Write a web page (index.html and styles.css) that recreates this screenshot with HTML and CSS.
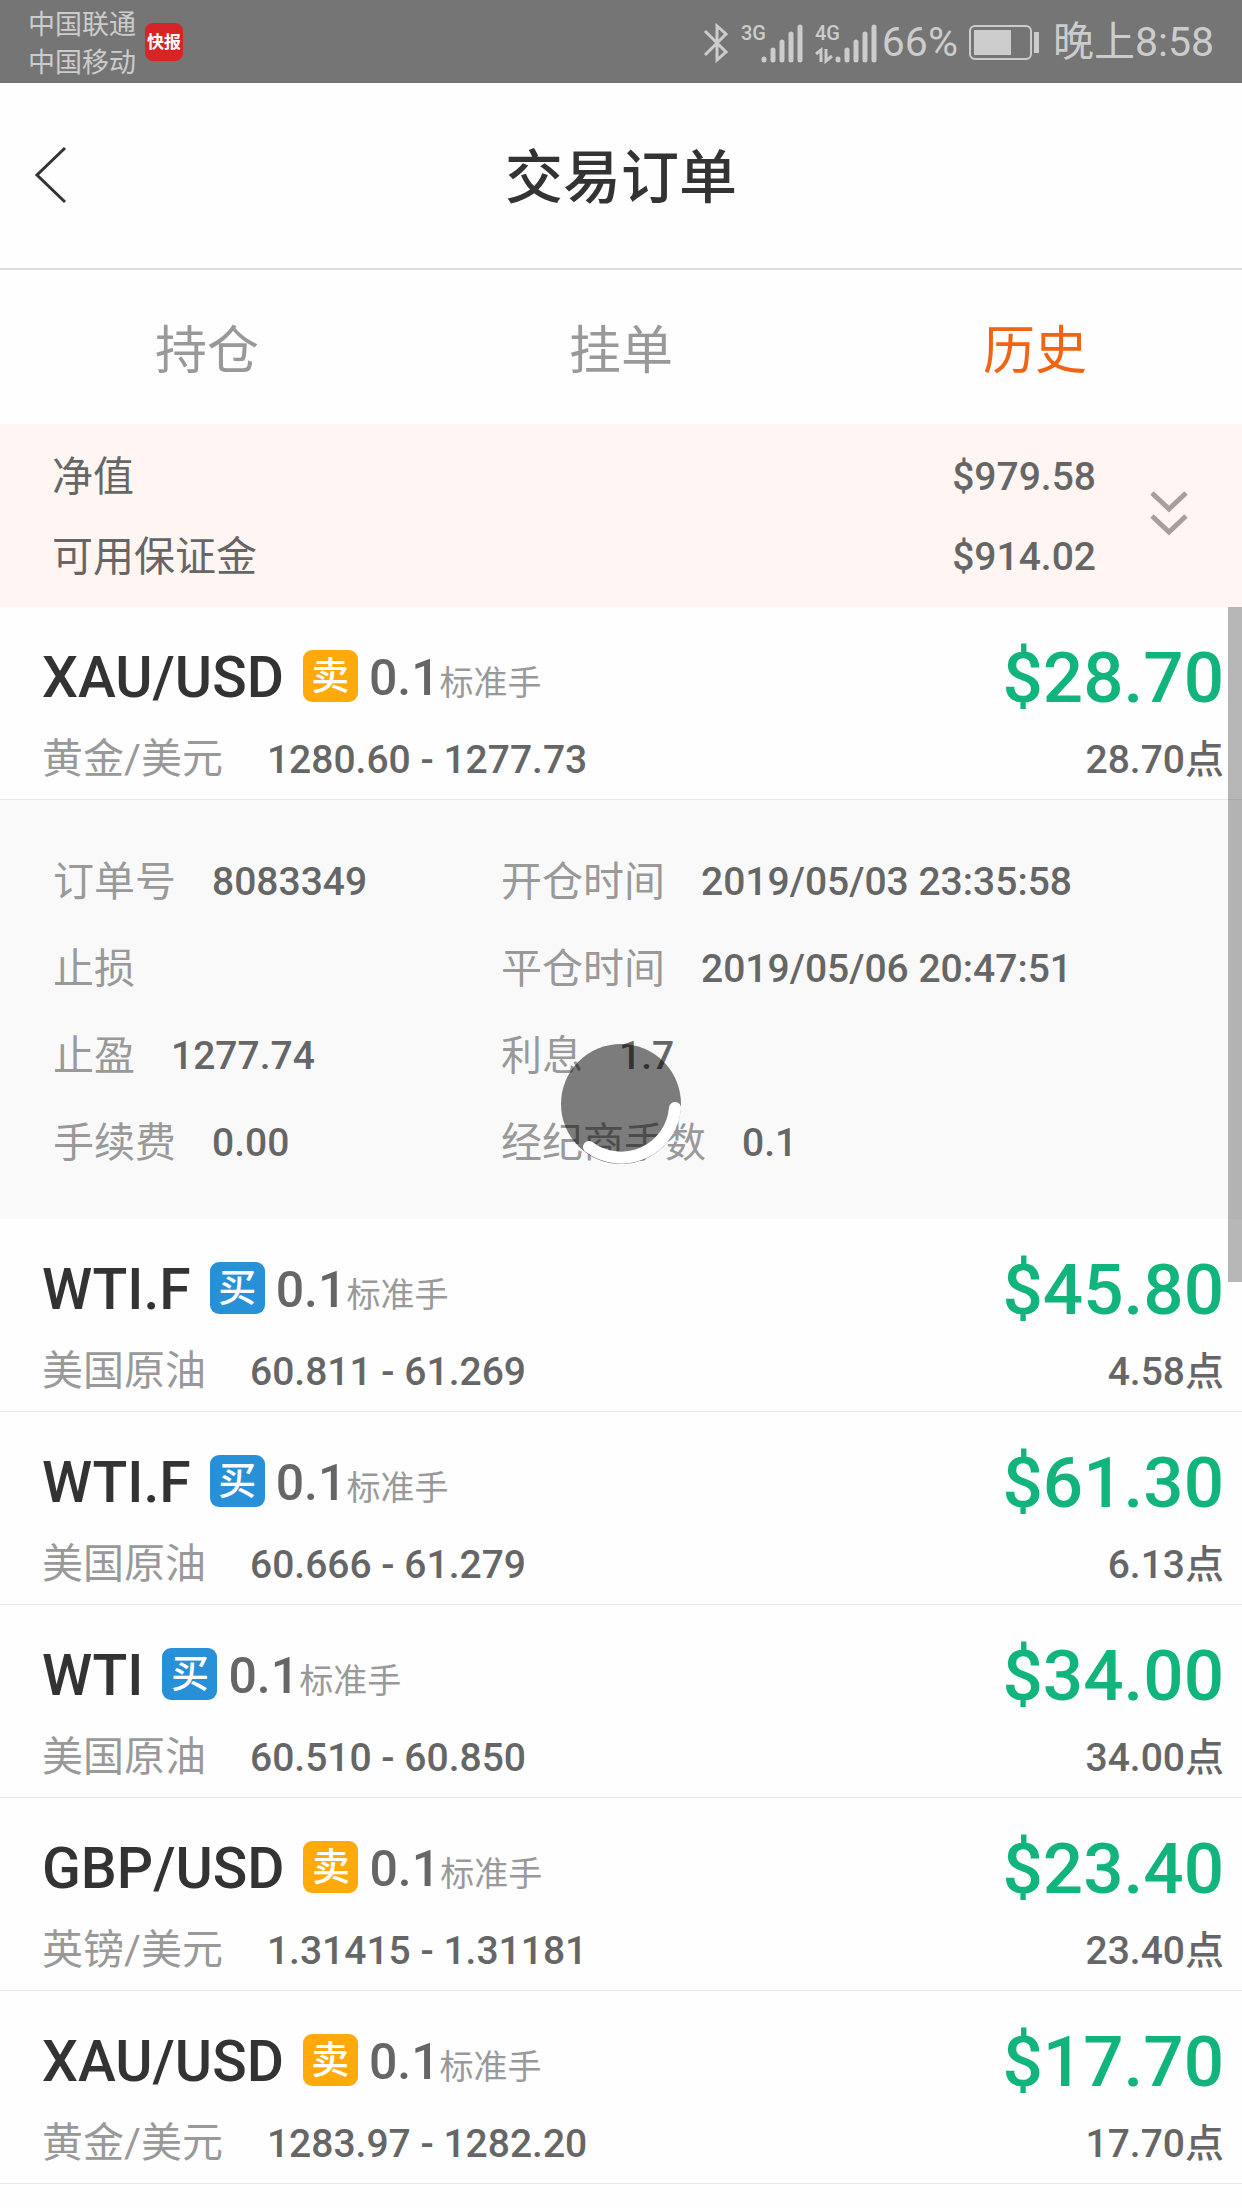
FILE: index.html
```
<!DOCTYPE html>
<html lang="zh-CN">
<head>
    <meta charset="UTF-8">
    <meta name="viewport" content="width=device-width, initial-scale=1.0">
    <title>交易订单</title>
    <link rel="stylesheet" href="styles.css">
</head>
<body>
    <div class="status-bar">
        <div class="carriers">
            <span>中国联通</span>
            <span>中国移动</span>
        </div>
        <span class="news-icon">快报</span>
        <div class="status-right">
            <svg class="bluetooth" width="26" height="42" viewBox="0 0 26 42">
                <path d="M2 9 L23 30 L14 38 V4 L23 12 L2 33" fill="none" stroke="#cccccc" stroke-width="3"/>
            </svg>
            <svg class="signal" width="62" height="42" viewBox="0 0 62 42">
                <text x="0" y="18" class="net">3G</text>
                <path d="M23 37V38 M32 28V38 M41 20V38 M50 12V38 M59 5V38" class="bars"/>
            </svg>
            <svg class="signal" width="62" height="42" viewBox="0 0 62 42">
                <text x="0" y="18" class="net">4G</text>
                <path d="M1 32 L6 28 V40 M17 34 L11 39 V27" fill="none" stroke="#cccccc" stroke-width="3"/>
                <path d="M23 37V38 M32 28V38 M41 20V38 M50 12V38 M59 5V38" class="bars"/>
            </svg>
            <span class="percent">66%</span>
            <svg class="battery" width="72" height="36" viewBox="0 0 72 36">
                <rect x="1" y="1" width="61" height="33" rx="5" fill="none" stroke="#cccccc" stroke-width="2"/>
                <rect x="5" y="5" width="37" height="25" fill="#cccccc"/>
                <rect x="65" y="7" width="5" height="21" fill="#cccccc"/>
            </svg>
            <span class="clock">晚上8:58</span>
        </div>
    </div>

    <header class="header">
        <button class="back-button" aria-label="返回">
            <svg width="34" height="60" viewBox="0 0 34 60">
                <path d="M32 3 L4 30 L32 57" fill="none" stroke="#333333" stroke-width="3"/>
            </svg>
        </button>
        <h1 class="title">交易订单</h1>
    </header>

    <nav class="tabs">
        <button class="tab">持仓</button>
        <button class="tab">挂单</button>
        <button class="tab active">历史</button>
    </nav>

    <section class="summary">
        <div class="summary-rows">
            <div class="summary-row"><span>净值</span><span class="number">$979.58</span></div>
            <div class="summary-row"><span>可用保证金</span><span class="number">$914.02</span></div>
        </div>
        <button class="expand-button" aria-label="展开">
            <svg width="38" height="46" viewBox="0 0 38 46">
                <path d="M2 3 L19 19 L36 3 M2 26 L19 42 L36 26" fill="none" stroke="#a89f9d" stroke-width="5"/>
            </svg>
        </button>
    </section>

    <main class="orders">
        <div class="scrollbar"></div>

        <article class="order">
            <div class="line main-line">
                <span class="symbol">XAU/USD</span>
                <span class="badge sell">卖</span>
                <span class="lots">0.1<small>标准手</small></span>
                <span class="profit">$28.70</span>
            </div>
            <div class="line sub-line">
                <span class="name">黄金/美元</span>
                <span class="prices number">1280.60 - 1277.73</span>
                <span class="points number">28.70点</span>
            </div>
        </article>

        <dl class="details">
            <div class="detail"><dt>订单号</dt><dd class="number">8083349</dd></div>
            <div class="detail"><dt>开仓时间</dt><dd class="number">2019/05/03 23:35:58</dd></div>
            <div class="detail"><dt>止损</dt><dd class="number"></dd></div>
            <div class="detail"><dt>平仓时间</dt><dd class="number">2019/05/06 20:47:51</dd></div>
            <div class="detail"><dt>止盈</dt><dd class="number">1277.74</dd></div>
            <div class="detail"><dt>利息</dt><dd class="number">1.7</dd></div>
            <div class="detail"><dt>手续费</dt><dd class="number">0.00</dd></div>
            <div class="detail"><dt>经纪商手数</dt><dd class="number">0.1</dd></div>
        </dl>

        <article class="order">
            <div class="line main-line">
                <span class="symbol">WTI.F</span>
                <span class="badge buy">买</span>
                <span class="lots">0.1<small>标准手</small></span>
                <span class="profit">$45.80</span>
            </div>
            <div class="line sub-line">
                <span class="name">美国原油</span>
                <span class="prices number">60.811 - 61.269</span>
                <span class="points number">4.58点</span>
            </div>
        </article>

        <article class="order">
            <div class="line main-line">
                <span class="symbol">WTI.F</span>
                <span class="badge buy">买</span>
                <span class="lots">0.1<small>标准手</small></span>
                <span class="profit">$61.30</span>
            </div>
            <div class="line sub-line">
                <span class="name">美国原油</span>
                <span class="prices number">60.666 - 61.279</span>
                <span class="points number">6.13点</span>
            </div>
        </article>

        <article class="order">
            <div class="line main-line">
                <span class="symbol">WTI</span>
                <span class="badge buy">买</span>
                <span class="lots">0.1<small>标准手</small></span>
                <span class="profit">$34.00</span>
            </div>
            <div class="line sub-line">
                <span class="name">美国原油</span>
                <span class="prices number">60.510 - 60.850</span>
                <span class="points number">34.00点</span>
            </div>
        </article>

        <article class="order">
            <div class="line main-line">
                <span class="symbol">GBP/USD</span>
                <span class="badge sell">卖</span>
                <span class="lots">0.1<small>标准手</small></span>
                <span class="profit">$23.40</span>
            </div>
            <div class="line sub-line">
                <span class="name">英镑/美元</span>
                <span class="prices number">1.31415 - 1.31181</span>
                <span class="points number">23.40点</span>
            </div>
        </article>

        <article class="order">
            <div class="line main-line">
                <span class="symbol">XAU/USD</span>
                <span class="badge sell">卖</span>
                <span class="lots">0.1<small>标准手</small></span>
                <span class="profit">$17.70</span>
            </div>
            <div class="line sub-line">
                <span class="name">黄金/美元</span>
                <span class="prices number">1283.97 - 1282.20</span>
                <span class="points number">17.70点</span>
            </div>
        </article>
    </main>

    <!-- loading spinner -->
    <div class="loading">
        <svg width="120" height="120" viewBox="0 0 120 120">
            <circle cx="60" cy="60" r="60" fill="#000000" fill-opacity="0.5"/>
            <path d="M114 64 A54 54 0 0 1 28 103" fill="none" stroke="#ffffff" stroke-width="12" stroke-linecap="round"/>
        </svg>
    </div>
</body>
</html>
```

FILE: styles.css
```
* {
    box-sizing: border-box;
}

body {
    margin: 0;
    min-height: 100vh;
    background-color: #fefefe;
    color: #666666;
    font-family: Roboto, "Noto Sans CJK SC", sans-serif;
    font-size: 41px;
    line-height: 1.2;
}

button {
    border: none;
    padding: 0;
    background: none;
    font-family: inherit;
    cursor: pointer;
}

svg {
    display: block;
}

.number {
    font-size: 39px;
    font-weight: 500;
}

/* status bar */
.status-bar {
    display: flex;
    align-items: center;
    height: 83px;
    padding: 0 28px;
    background-color: #757575;
    color: #cccccc;
}

.carriers {
    display: flex;
    flex-direction: column;
    padding-top: 5px;
    font-size: 27px;
    line-height: 38px;
}

.news-icon {
    width: 38px;
    height: 38px;
    margin-left: 9px;
    border-radius: 8px;
    background-color: #d92426;
    color: #ffffff;
    font-size: 17px;
    font-weight: 700;
    line-height: 38px;
    text-align: center;
}

.status-right {
    display: flex;
    align-items: center;
    padding-top: 2px;
    margin-left: auto;
    font-size: 41px;
    white-space: nowrap;
}

.signal {
    margin-left: 12px;
}

.net {
    fill: #cccccc;
    font-size: 20px;
    font-weight: 500;
}

.bars {
    stroke: #cccccc;
    stroke-width: 5;
    stroke-linecap: round;
}

.percent {
    margin-left: 5px;
}

.battery {
    margin: 0 12px 0 11px;
}

/* header */
.header {
    display: grid;
    grid-template-columns: 1fr auto 1fr;
    align-items: center;
    height: 187px;
    padding: 0 33px 2px;
    border-bottom: 2px solid #dddddd;
}

.back-button {
    justify-self: start;
}

.title {
    margin: 0;
    padding-top: 8px;
    color: #333333;
    font-size: 58px;
    font-weight: 500;
}

.tabs {
    display: flex;
    height: 154px;
}

.tab {
    flex: 1;
    padding-bottom: 2px;
    color: #999999;
    font-size: 52px;
}

.tab.active {
    color: #f06414;
}

/* account summary */
.summary {
    display: flex;
    align-items: center;
    height: 183px;
    padding: 0 54px 0 52px;
    background-color: #fff6f3;
}

.summary-rows {
    flex: 1;
    padding-top: 2px;
}

.summary-row {
    display: flex;
    justify-content: space-between;
    line-height: 80px;
}

.expand-button {
    margin-left: 54px;
    padding-bottom: 6px;
}

/* order list */
.orders {
    position: relative;
}

.scrollbar {
    position: absolute;
    top: 0;
    right: 0;
    width: 14px;
    height: 675px;
    background-color: rgba(0, 0, 0, 0.28);
}

.order {
    padding: 23px 18px 5px 42px;
    border-bottom: 1px solid #e8e8e8;
    white-space: nowrap;
}

.line {
    display: flex;
    align-items: center;
}

.main-line {
    height: 96px;
}

.sub-line {
    height: 68px;
}

.symbol {
    color: #333333;
    font-size: 57px;
    font-weight: 500;
}

.badge {
    width: 55px;
    height: 52px;
    margin: 0 11px 4px 19px;
    border-radius: 9px;
    color: #ffffff;
    font-size: 38px;
    font-weight: 500;
    line-height: 52px;
    text-align: center;
}

.sell {
    background-color: #ffaa0a;
}

.buy {
    background-color: #2890d6;
}

.lots {
    font-size: 50px;
    font-weight: 500;
}

.lots small {
    color: #999999;
    font-size: 34px;
    font-weight: 400;
}

.profit {
    margin-left: auto;
    color: #11b57c;
    font-size: 71px;
    font-weight: 500;
}

.name {
    color: #999999;
}

.prices {
    margin-left: 44px;
}

.points {
    margin-left: auto;
}

.details {
    display: grid;
    grid-template-columns: 448px 1fr;
    grid-auto-rows: 87px;
    margin: 0;
    padding: 39px 53px 32px;
    background-color: #f9f9f9;
}

.detail {
    display: flex;
    align-items: center;
    gap: 36px;
    white-space: nowrap;
}

.detail dt {
    color: #999999;
}

.detail dd {
    margin: 0;
}

.loading {
    position: fixed;
    top: 50%;
    left: 50%;
    transform: translate(-50%, -50%);
}
```
